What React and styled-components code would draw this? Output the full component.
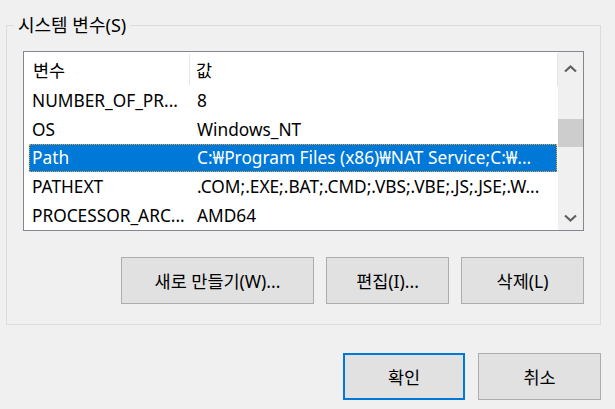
import styled, { createGlobalStyle } from 'styled-components';

const GlobalStyle = createGlobalStyle`
	html, body {
		margin: 0;
		padding: 0;
		background: #f0f0f0;
	}
	body {
		font-family: 'Noto Sans', 'Noto Sans CJK KR', sans-serif;
		font-size: 17px;
		color: #000;
	}
	* {
		box-sizing: border-box;
	}
`;

const Page = styled.div`
	width: 615px;
	height: 409px;
	padding: 14px 14px 0 6px;
	display: flex;
	flex-direction: column;
	overflow: hidden;
`;

const Group = styled.fieldset`
	margin: 0;
	padding: 15px 16px 20px 16px;
	border: 1px solid #dcdcdc;
	min-width: 0;
`;

const Legend = styled.legend`
	margin-left: -9px;
	padding: 0 4px;
	line-height: 22px;
	font-size: 18px;
`;

const ListBox = styled.div`
	height: 180px;
	border: 1px solid #828790;
	background: #fff;
	display: flex;
`;

const Table = styled.div`
	flex: 1;
	display: flex;
	flex-direction: column;
`;

const Header = styled.div`
	height: 33px;
	display: grid;
	grid-template-columns: 166px 1fr;
	align-items: center;
	border-right: 1px solid #e5e5e5;
	margin: 1px 0 0 0;
`;

const HeadCell = styled.div`
	height: 31px;
	display: flex;
	align-items: center;
	padding-left: ${(p) => (p.first ? '9px' : '6px')};
	border-right: ${(p) => (p.first ? '1px solid #e5e5e5' : 'none')};
	white-space: nowrap;
	font-size: 17.5px;
`;

const Row = styled.div`
	height: 29px;
	margin: 0 1px 0 5px;
	display: grid;
	grid-template-columns: 168px 1fr;
	align-items: center;
	white-space: nowrap;
	background: ${(p) => (p.selected ? '#0078d7' : 'transparent')};
	color: ${(p) => (p.selected ? '#fff' : '#000')};
	outline: ${(p) => (p.selected ? '1px dotted #f0a030' : 'none')};
	outline-offset: -1px;
	font-size: 17.3px;
`;

const Cell = styled.div`
	padding-left: ${(p) => (p.first ? '3px' : '0')};
	overflow: hidden;
`;

const Scrollbar = styled.div`
	width: 25px;
	background: #f0f0f0;
	display: flex;
	flex-direction: column;
`;

const ArrowButton = styled.div`
	height: ${(p) => p.h}px;
	display: flex;
	align-items: center;
	justify-content: center;
`;

const Thumb = styled.div`
	height: 28px;
	margin-top: 34px;
	background: #cdcdcd;
`;

const Track = styled.div`
	flex: 1;
`;

const ButtonRow = styled.div`
	display: flex;
	justify-content: flex-end;
	gap: 12px;
	margin-top: 26px;
`;

const Button = styled.button`
	width: ${(p) => p.w}px;
	height: 47px;
	margin: 0;
	padding: 0;
	background: #e1e1e1;
	border: ${(p) => (p.primary ? '2px solid #0078d7' : '1px solid #adadad')};
	font-family: inherit;
	font-size: 17.5px;
	color: #000;
`;

const Footer = styled.div`
	display: flex;
	justify-content: flex-end;
	gap: 13px;
	margin-top: 28px;
`;

const Chevron = ({ down }) => (
	<svg width='13' height='8' viewBox='0 0 13 8'>
		<path
			d={down ? 'M1 1.5 L6.5 6.5 L12 1.5' : 'M1 6.5 L6.5 1.5 L12 6.5'}
			fill='none'
			stroke='#606060'
			strokeWidth='2.2'
		/>
	</svg>
);

const vars = [
	{ name: 'NUMBER_OF_PR...', value: '8' },
	{ name: 'OS', value: 'Windows_NT' },
	{ name: 'Path', value: 'C:₩Program Files (x86)₩NAT Service;C:₩...', selected: true },
	{ name: 'PATHEXT', value: '.COM;.EXE;.BAT;.CMD;.VBS;.VBE;.JS;.JSE;.W...' },
	{ name: 'PROCESSOR_ARC...', value: 'AMD64' },
];

export default function App() {
	return (
		<>
			<GlobalStyle />
			<Page>
				<Group>
					<Legend>시스템 변수(S)</Legend>
					<ListBox>
						<Table>
							<Header>
								<HeadCell first>변수</HeadCell>
								<HeadCell>값</HeadCell>
							</Header>
							{vars.map((v) => (
								<Row key={v.name} selected={v.selected}>
									<Cell first>{v.name}</Cell>
									<Cell>{v.value}</Cell>
								</Row>
							))}
						</Table>
						<Scrollbar>
							<ArrowButton h={33}>
								<Chevron />
							</ArrowButton>
							<Thumb />
							<Track />
							<ArrowButton h={25}>
								<Chevron down />
							</ArrowButton>
						</Scrollbar>
					</ListBox>
					<ButtonRow>
						<Button w={193}>새로 만들기(W)...</Button>
						<Button w={123}>편집(I)...</Button>
						<Button w={123}>삭제(L)</Button>
					</ButtonRow>
				</Group>
				<Footer>
					<Button w={122} primary>
						확인
					</Button>
					<Button w={123}>취소</Button>
				</Footer>
			</Page>
		</>
	);
}
